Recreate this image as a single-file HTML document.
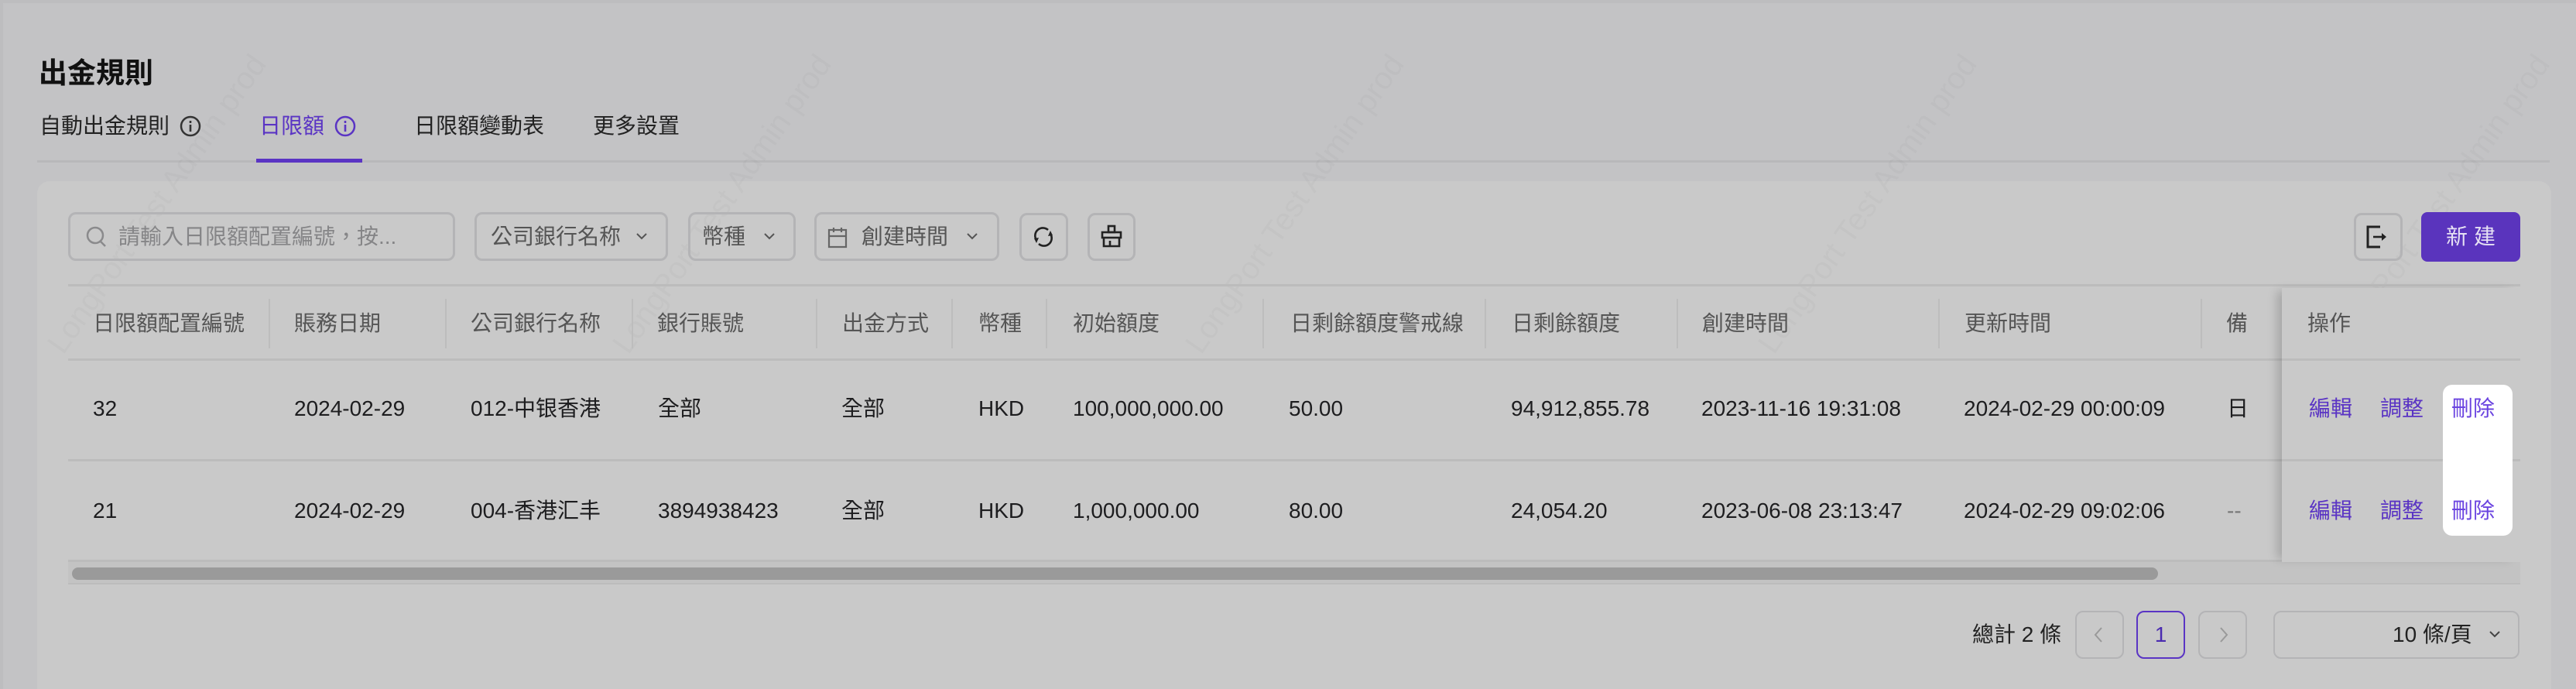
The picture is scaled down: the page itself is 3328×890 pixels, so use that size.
<!DOCTYPE html>
<html><head><meta charset="utf-8"><style>
*{box-sizing:border-box;margin:0;padding:0}
html,body{width:3328px;height:890px;overflow:hidden}
body{background:#c3c3c5;font-family:"Liberation Sans","Noto Sans CJK TC",sans-serif;color:#1d1d1f;position:relative}
.a{position:absolute;white-space:nowrap}
.t{font-size:28px;line-height:28px}
.box{position:absolute;border:3px solid #b4b4b6;border-radius:10px}
.hd{color:#555;font-size:28px;line-height:28px}
.dv{position:absolute;width:2px;height:64px;background:#bdbdbd;top:386px}
.ln{position:absolute;height:3px;background:#bcbcbc}
.lk{color:#5a34c4;font-size:28px;line-height:28px}
.wm{position:absolute;color:rgba(0,0,0,0.025);font-size:40px;transform:rotate(-55deg);transform-origin:left bottom;white-space:nowrap}
</style></head><body>
<div class="a" style="left:0;top:0;width:3328px;height:4px;background:#bdbdbf"></div>
<div class="a" style="left:0;top:0;width:4px;height:890px;background:#bdbdbf"></div>
<div class="a" style="left:50px;top:64px;font-size:37px;font-weight:bold;color:#111">出金規則</div>
<div class="a t" style="left:51px;top:149px;color:#222">自動出金規則</div>
<svg class="a" style="left:231px;top:148px" width="30" height="30" viewBox="0 0 30 30"><circle cx="15" cy="15" r="12" fill="none" stroke="#333" stroke-width="2.5"/><rect x="13.7" y="13" width="2.6" height="9" fill="#333"/><rect x="13.7" y="8" width="2.6" height="3" fill="#333"/></svg>
<div class="a t" style="left:335px;top:149px;color:#5a34c4">日限額</div>
<svg class="a" style="left:431px;top:148px" width="30" height="30" viewBox="0 0 30 30"><circle cx="15" cy="15" r="12" fill="none" stroke="#5a34c4" stroke-width="2.5"/><rect x="13.7" y="13" width="2.6" height="9" fill="#5a34c4"/><rect x="13.7" y="8" width="2.6" height="3" fill="#5a34c4"/></svg>
<div class="a t" style="left:535px;top:149px;color:#222">日限額變動表</div>
<div class="a t" style="left:766px;top:149px;color:#222">更多設置</div>
<div class="a" style="left:48px;top:207px;width:3246px;height:3px;background:#b8b8ba"></div>
<div class="a" style="left:331px;top:205px;width:137px;height:5px;background:#5a34c4"></div>

<div class="a" style="left:48px;top:234px;width:3248px;height:656px;background:#c9c9c9;border-radius:16px 16px 0 0"></div>

<div class="wm" style="left:90px;top:420px">LongPort Test Admin prod</div>
<div class="wm" style="left:820px;top:420px">LongPort Test Admin prod</div>
<div class="wm" style="left:1560px;top:420px">LongPort Test Admin prod</div>
<div class="wm" style="left:2300px;top:420px">LongPort Test Admin prod</div>
<div class="wm" style="left:3040px;top:420px">LongPort Test Admin prod</div>

<div class="box" style="left:88px;top:274px;width:500px;height:63px"></div>
<svg class="a" style="left:110px;top:290px" width="30" height="32" viewBox="0 0 30 32"><circle cx="13" cy="14" r="10" fill="none" stroke="#8a8a8c" stroke-width="2.5"/><line x1="20" y1="22" x2="26" y2="28" stroke="#8a8a8c" stroke-width="2.5"/></svg>
<div class="a t" style="left:153px;top:292px;color:#858587">請輸入日限額配置編號，按...</div>

<div class="box" style="left:613px;top:274px;width:250px;height:63px"></div>
<div class="a t" style="left:634px;top:292px;color:#555">公司銀行名称</div>
<svg class="a" style="left:820px;top:298px" width="18" height="14" viewBox="0 0 18 14"><path d="M3 4 L9 10 L15 4" fill="none" stroke="#555" stroke-width="2"/></svg>

<div class="box" style="left:889px;top:274px;width:139px;height:63px"></div>
<div class="a t" style="left:907px;top:292px;color:#555">幣種</div>
<svg class="a" style="left:985px;top:298px" width="18" height="14" viewBox="0 0 18 14"><path d="M3 4 L9 10 L15 4" fill="none" stroke="#555" stroke-width="2"/></svg>

<div class="box" style="left:1052px;top:274px;width:239px;height:63px"></div>
<svg class="a" style="left:1068px;top:292px" width="28" height="30" viewBox="0 0 28 30"><rect x="3" y="5" width="22" height="22" fill="none" stroke="#666" stroke-width="2.2"/><line x1="3" y1="13" x2="25" y2="13" stroke="#666" stroke-width="2.2"/><line x1="9" y1="2" x2="9" y2="8" stroke="#666" stroke-width="2.2"/><line x1="19" y1="2" x2="19" y2="8" stroke="#666" stroke-width="2.2"/></svg>
<div class="a t" style="left:1113px;top:292px;color:#555">創建時間</div>
<svg class="a" style="left:1247px;top:298px" width="18" height="14" viewBox="0 0 18 14"><path d="M3 4 L9 10 L15 4" fill="none" stroke="#555" stroke-width="2"/></svg>

<div class="box" style="left:1317px;top:275px;width:63px;height:62px"></div>
<svg class="a" style="left:1330px;top:288px" width="36" height="36" viewBox="0 0 36 36"><path d="M9 22 A10 10 0 0 1 24 9" fill="none" stroke="#222" stroke-width="2.6"/><path d="M27 14 A10 10 0 0 1 12 27" fill="none" stroke="#222" stroke-width="2.6"/><path d="M6 20 L12 19 L9 26 Z" fill="#222"/><path d="M30 16 L24 17 L27 10 Z" fill="#222"/></svg>
<div class="box" style="left:1405px;top:275px;width:62px;height:62px"></div>
<svg class="a" style="left:1418px;top:288px" width="36" height="36" viewBox="0 0 36 36"><rect x="14" y="4" width="8" height="8" fill="none" stroke="#222" stroke-width="2.6"/><rect x="6" y="12" width="24" height="7" fill="none" stroke="#222" stroke-width="2.6"/><path d="M8 19 V30 H28 V19 M16 30 V23" fill="none" stroke="#222" stroke-width="2.6"/></svg>

<div class="box" style="left:3041px;top:275px;width:63px;height:62px"></div>
<svg class="a" style="left:3055px;top:290px" width="34" height="32" viewBox="0 0 34 32"><path d="M20 3 H4 V29 H20" fill="none" stroke="#222" stroke-width="3"/><line x1="11" y1="16" x2="24" y2="16" stroke="#222" stroke-width="2.6"/><path d="M22 11 L28 16 L22 21 Z" fill="#222"/></svg>
<div class="a" style="left:3128px;top:274px;width:128px;height:64px;background:#5a34bd;border-radius:8px;color:#e6e1f4;font-size:28px;line-height:64px;text-align:center;letter-spacing:8px;padding-left:8px">新建</div>

<div class="ln" style="left:88px;top:367px;width:3168px"></div>
<div class="ln" style="left:88px;top:463px;width:3168px"></div>
<div class="ln" style="left:88px;top:593px;width:3168px"></div>
<div class="ln" style="left:88px;top:723px;width:3168px"></div>
<div class="a" style="left:88px;top:726px;width:3168px;height:28px;background:#c3c3c3"></div>
<div class="a" style="left:93px;top:733px;width:2695px;height:16px;background:#9a9a9a;border-radius:8px"></div>
<div class="ln" style="left:88px;top:753px;width:3168px;height:2px"></div>

<div class="dv" style="left:347px"></div><div class="dv" style="left:575px"></div><div class="dv" style="left:816px"></div><div class="dv" style="left:1054px"></div><div class="dv" style="left:1229px"></div><div class="dv" style="left:1351px"></div><div class="dv" style="left:1631px"></div><div class="dv" style="left:1918px"></div><div class="dv" style="left:2166px"></div><div class="dv" style="left:2504px"></div><div class="dv" style="left:2843px"></div>

<div class="a hd" style="left:120px;top:404px">日限額配置編號</div>
<div class="a hd" style="left:380px;top:404px">賬務日期</div>
<div class="a hd" style="left:608px;top:404px">公司銀行名称</div>
<div class="a hd" style="left:849px;top:404px">銀行賬號</div>
<div class="a hd" style="left:1088px;top:404px">出金方式</div>
<div class="a hd" style="left:1264px;top:404px">幣種</div>
<div class="a hd" style="left:1386px;top:404px">初始額度</div>
<div class="a hd" style="left:1667px;top:404px">日剩餘額度警戒線</div>
<div class="a hd" style="left:1953px;top:404px">日剩餘額度</div>
<div class="a hd" style="left:2199px;top:404px">創建時間</div>
<div class="a hd" style="left:2538px;top:404px">更新時間</div>
<div class="a hd" style="left:2876px;top:404px">備</div>

<div class="a t" style="left:120px;top:514px">32</div>
<div class="a t" style="left:380px;top:514px">2024-02-29</div>
<div class="a t" style="left:608px;top:514px">012-中银香港</div>
<div class="a t" style="left:850px;top:514px">全部</div>
<div class="a t" style="left:1087px;top:514px">全部</div>
<div class="a t" style="left:1264px;top:514px">HKD</div>
<div class="a t" style="left:1386px;top:514px">100,000,000.00</div>
<div class="a t" style="left:1665px;top:514px">50.00</div>
<div class="a t" style="left:1952px;top:514px">94,912,855.78</div>
<div class="a t" style="left:2198px;top:514px">2023-11-16 19:31:08</div>
<div class="a t" style="left:2537px;top:514px">2024-02-29 00:00:09</div>
<div class="a t" style="left:2877px;top:514px">日</div>

<div class="a t" style="left:120px;top:646px">21</div>
<div class="a t" style="left:380px;top:646px">2024-02-29</div>
<div class="a t" style="left:608px;top:646px">004-香港汇丰</div>
<div class="a t" style="left:850px;top:646px">3894938423</div>
<div class="a t" style="left:1087px;top:646px">全部</div>
<div class="a t" style="left:1264px;top:646px">HKD</div>
<div class="a t" style="left:1386px;top:646px">1,000,000.00</div>
<div class="a t" style="left:1665px;top:646px">80.00</div>
<div class="a t" style="left:1952px;top:646px">24,054.20</div>
<div class="a t" style="left:2198px;top:646px">2023-06-08 23:13:47</div>
<div class="a t" style="left:2537px;top:646px">2024-02-29 09:02:06</div>
<div class="a t" style="left:2877px;top:646px;color:#777">--</div>

<div class="a" style="left:2948px;top:372px;width:308px;height:354px;background:#c9c9c9;box-shadow:-10px 0 12px -4px rgba(0,0,0,0.18)"></div>
<div class="ln" style="left:2948px;top:463px;width:308px"></div>
<div class="ln" style="left:2948px;top:593px;width:308px"></div>
<div class="a hd" style="left:2981px;top:404px">操作</div>
<div class="a" style="left:3156px;top:497px;width:90px;height:195px;background:#fff;border-radius:12px"></div>
<div class="a lk" style="left:2983px;top:514px">編輯</div>
<div class="a lk" style="left:3075px;top:514px">調整</div>
<div class="a lk" style="left:3167px;top:514px;color:#6b44e0">刪除</div>
<div class="a lk" style="left:2983px;top:646px">編輯</div>
<div class="a lk" style="left:3075px;top:646px">調整</div>
<div class="a lk" style="left:3167px;top:646px;color:#6b44e0">刪除</div>

<div class="a t" style="left:2548px;top:806px;color:#222">總計 2 條</div>
<div class="box" style="left:2681px;top:789px;width:63px;height:62px;border-width:2px"></div>
<svg class="a" style="left:2700px;top:806px" width="24" height="28" viewBox="0 0 24 28"><path d="M15 5 L7 14 L15 23" fill="none" stroke="#999" stroke-width="2"/></svg>
<div class="box" style="left:2760px;top:789px;width:63px;height:62px;border:2px solid #5a34c4;color:#4a2bb0;font-size:28px;text-align:center;line-height:58px">1</div>
<div class="box" style="left:2840px;top:789px;width:63px;height:62px;border-width:2px"></div>
<svg class="a" style="left:2860px;top:806px" width="24" height="28" viewBox="0 0 24 28"><path d="M9 5 L17 14 L9 23" fill="none" stroke="#999" stroke-width="2"/></svg>
<div class="box" style="left:2937px;top:789px;width:318px;height:62px;border-width:2px"></div>
<div class="a t" style="left:3091px;top:806px;color:#222">10 條/頁</div>
<svg class="a" style="left:3214px;top:812px" width="18" height="14" viewBox="0 0 18 14"><path d="M3 4 L9 10 L15 4" fill="none" stroke="#444" stroke-width="2"/></svg>
</body></html>
